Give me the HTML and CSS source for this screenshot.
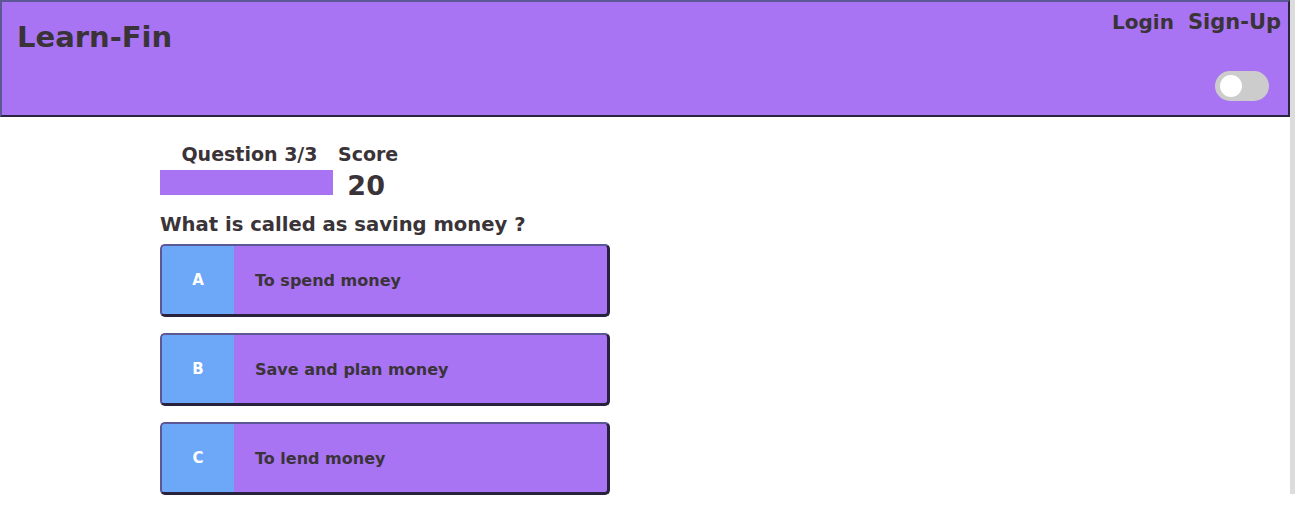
FILE: index.html
```html
<!DOCTYPE html>
<html lang="en">
<head>
<meta charset="utf-8">
<title>Learn-Fin</title>
<link rel="stylesheet" href="styles.css">
</head>
<body>
<header class="topbar">
  <div class="brand">Learn-Fin</div>
  <div class="right">
    <nav class="links">
      <a href="#" class="link">Login</a>
      <a href="#" class="link">Sign-Up</a>
    </nav>
    <div class="toggle"><span class="knob"></span></div>
  </div>
</header>
<main class="quiz">
  <div class="stats">
    <div class="stat-col">
      <div class="stat-label">Question 3/3</div>
      <div class="progress"></div>
    </div>
    <div class="stat-col">
      <div class="stat-label">Score</div>
      <div class="score">20</div>
    </div>
  </div>
  <h2 class="question">What is called as saving money ?</h2>
  <div class="options">
    <button class="option"><span class="letter">A</span><span class="answer">To spend money</span></button>
    <button class="option"><span class="letter">B</span><span class="answer">Save and plan money</span></button>
    <button class="option"><span class="letter">C</span><span class="answer">To lend money</span></button>
  </div>
</main>
</body>
</html>
```
FILE: styles.css
```css
body {
  margin: 0 5px 0 0;
  font-family: "DejaVu Sans", "Open Sans", sans-serif;
  color: #3a3338;
  background: #fff;
}
body::after {
  content: "";
  position: fixed;
  top: 0;
  right: 0;
  width: 5px;
  height: 494px;
  background: #dcdcdc;
}

.topbar {
  display: flex;
  justify-content: space-between;
  align-items: flex-start;
  height: 113px;
  background: #a874f4;
  border-style: solid;
  border-width: 2px;
  border-color: #5c5896 #2a2440 #2a2440 #5c5896;
}
.brand {
  font-size: 29px;
  font-weight: 700;
  margin: 18px 0 0 15px;
}
.right {
  display: flex;
  flex-direction: column;
  align-items: flex-end;
  padding: 8px 7px 0 0;
}
.links { display: flex; gap: 14px; }
.link {
  color: #3a3338;
  text-decoration: none;
  font-size: 20px;
  font-weight: 700;
}
.link:last-child { font-size: 21px; }
.toggle {
  margin: 37px 12px 0 0;
  width: 54px;
  height: 30px;
  border-radius: 15px;
  background: #cccccc;
  display: flex;
  align-items: center;
  padding-left: 5px;
  box-sizing: border-box;
}
.knob {
  width: 22px;
  height: 22px;
  border-radius: 50%;
  background: #fff;
}

.quiz {
  margin: 22px 0 0 160px;
  width: 450px;
}
.stats { display: flex; gap: 5px; }
.stat-col {
  display: flex;
  flex-direction: column;
  align-items: center;
}
.stat-label {
  font-size: 19px;
  font-weight: 700;
  line-height: 30px;
  padding: 0 0 0 6px;
}
.stat-col:last-child .stat-label { padding: 0; }
.progress {
  width: 173px;
  height: 25px;
  margin-top: 1px;
  background: #a874f4;
}
.score {
  font-size: 27px;
  font-weight: 700;
  line-height: 34px;
  margin-left: -4px;
}
.question {
  margin: 7px 0 0;
  font-size: 19.6px;
  font-weight: 700;
  line-height: 30px;
}
.options {
  display: flex;
  flex-direction: column;
  gap: 16px;
  margin-top: 4px;
}
.option {
  display: flex;
  align-items: stretch;
  width: 450px;
  height: 73px;
  padding: 0;
  background: #a874f4;
  border-style: solid;
  border-width: 2px 3px 3px 2px;
  border-color: #5c5896 #28223d #28223d #5c5896;
  border-radius: 5px;
  overflow: hidden;
  font-family: inherit;
  cursor: pointer;
  text-align: left;
}
.letter {
  width: 72px;
  background: #6ca7f8;
  color: #fff;
  font-size: 15px;
  font-weight: 700;
  display: flex;
  align-items: center;
  justify-content: center;
}
.answer {
  display: flex;
  align-items: center;
  padding-left: 21px;
  font-size: 16px;
  font-weight: 700;
  color: #3a3338;
}
```
